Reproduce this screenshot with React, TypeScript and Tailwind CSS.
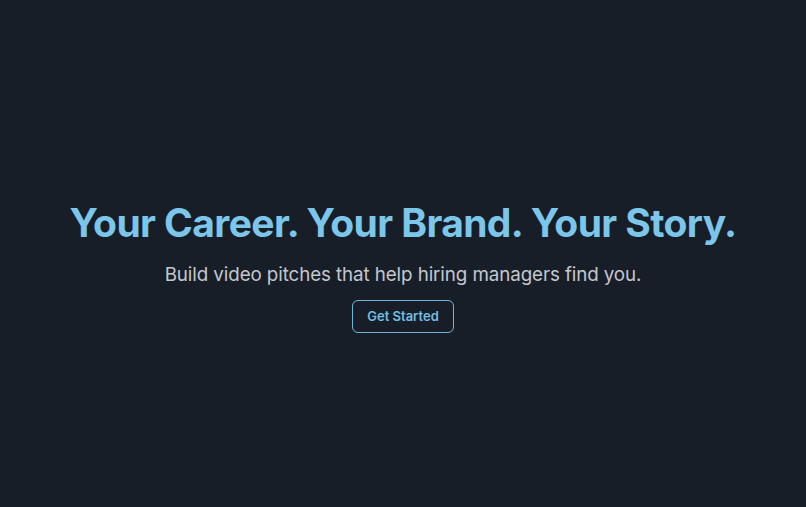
export default function App() {
  return (
    <div
      className="min-h-screen w-full bg-[#181e27] flex flex-col items-center justify-center pt-[26px]"
      style={{ fontFamily: "Inter, 'Noto Sans', sans-serif" }}
    >
      <h1 className="text-[39px] leading-[46px] font-bold text-[#7cc6ea] tracking-[-0.6px]">
        Your Career. Your Brand. Your Story.
      </h1>
      <p className="mt-[16px] text-[18.8px] leading-[26px] text-[#c3c7ce] tracking-[-0.1px]">
        Build video pitches that help hiring managers find you.
      </p>
      <button className="mt-[12px] h-[33px] px-[14px] rounded-md border border-[#6fb6d9] text-[#72bde3] text-[13px] font-semibold">
        Get Started
      </button>
    </div>
  );
}
